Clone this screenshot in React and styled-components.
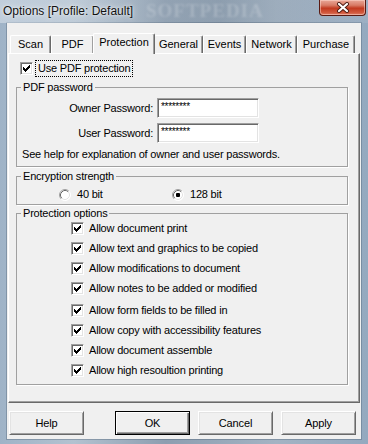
import React from 'react';
import styled, { createGlobalStyle } from 'styled-components';

const GlobalStyle = createGlobalStyle`
  html, body {
    margin: 0;
    padding: 0;
    background: #8ea4ba;
  }
  body {
    font-family: "Liberation Sans", Arial, sans-serif;
    font-size: 11px;
    color: #000;
  }
`;

const Window = styled.div`
  width: 368px;
  height: 444px;
  display: flex;
  flex-direction: column;
  background: linear-gradient(90deg, #9fb3c7 0%, #b3c2d0 20%, #8d9eb0 45%, #a3b3c3 75%, #94a9bf 100%);
  overflow: hidden;
`;

const TitleBar = styled.div`
  position: relative;
  height: 23px;
  display: flex;
  justify-content: space-between;
  align-items: flex-start;
  background: linear-gradient(90deg, rgba(220, 228, 236, 0.55) 0%, rgba(200, 210, 220, 0.25) 35%, rgba(80, 96, 112, 0.15) 60%, rgba(190, 200, 212, 0.2) 100%);
`;

const Title = styled.div`
  position: relative;
  z-index: 1;
  font-family: "Liberation Sans", Arial, sans-serif;
  font-size: 12px;
  line-height: 14px;
  padding: 4px 0 0 3px;
  color: #111;
  text-shadow: 0 0 6px rgba(255, 255, 255, 0.9), 0 0 2px rgba(255, 255, 255, 0.8);
`;

const Watermark = styled.div`
  position: absolute;
  left: 146px;
  top: 1px;
  font-family: "Liberation Serif", serif;
  font-weight: bold;
  font-size: 19px;
  line-height: 20px;
  letter-spacing: 1px;
  color: rgba(255, 255, 255, 0.2);
  filter: blur(0.8px);
  pointer-events: none;
`;

const CloseButton = styled.div`
  position: relative;
  z-index: 1;
  width: 47px;
  height: 16px;
  margin-right: 2px;
  box-sizing: border-box;
  border: 1px solid #5a1a12;
  border-top: none;
  border-radius: 0 0 4px 4px;
  background: linear-gradient(180deg, #e9a898 0%, #d87b66 35%, #c23a20 55%, #d15a3f 85%, #e0806a 100%);
  box-shadow: inset 0 0 0 1px rgba(255, 220, 210, 0.5);
  display: flex;
  align-items: center;
  justify-content: center;
`;

const Body = styled.div`
  flex: 1;
  display: flex;
  padding: 0 7px 5px 7px;
`;

const Client = styled.div`
  flex: 1;
  display: flex;
  flex-direction: column;
  background: #f0f0f0;
  padding-top: 10px;
  box-shadow: 0 0 0 1px rgba(70, 90, 110, 0.35);
`;

const TabStrip = styled.div`
  display: flex;
  align-items: flex-end;
  height: 20px;
  padding-left: 3px;
`;

const Tab = styled.div`
  position: relative;
  box-sizing: border-box;
  width: ${p => p.$w}px;
  height: ${p => (p.$active ? 21 : 18)}px;
  margin: ${p => (p.$active ? '0 -1px -1px -1px' : '0')};
  z-index: ${p => (p.$active ? 2 : 1)};
  background: #f0f0f0;
  border-top: 1px solid #fff;
  border-left: 1px solid #fff;
  border-right: 1px solid #696969;
  border-radius: 2px 2px 0 0;
  box-shadow: inset -1px 0 0 #a0a0a0;
  display: flex;
  align-items: center;
  justify-content: center;
  padding-bottom: ${p => (p.$active ? 3 : 0)}px;
  line-height: 13px;
`;

const Panel = styled.div`
  box-sizing: border-box;
  margin-left: 1px;
  width: 352px;
  display: flex;
  flex-direction: column;
  padding: 7px 0 17px 7px;
  border-top: 1px solid #fff;
  border-left: 1px solid #fff;
  border-right: 1px solid #696969;
  border-bottom: 1px solid #696969;
  box-shadow: inset -1px -1px 0 #a0a0a0;
`;

const CheckRow = styled.div`
  display: flex;
  align-items: center;
  height: 15px;
  padding-left: ${p => p.$indent || 0}px;
  margin-top: ${p => p.$mt || 0}px;
  gap: ${p => p.$gap || 5}px;
`;

const Box = styled.span`
  box-sizing: border-box;
  width: 13px;
  height: 13px;
  flex: none;
  background: #fff;
  border-top: 1px solid #a0a0a0;
  border-left: 1px solid #a0a0a0;
  border-right: 1px solid #fff;
  border-bottom: 1px solid #fff;
  box-shadow: inset 1px 1px 0 #696969, inset -1px -1px 0 #e3e3e3;
  display: flex;
`;

const FocusLabel = styled.span`
  outline: 1px dotted #000;
  outline-offset: 0;
  padding: 1px 2px;
  line-height: 13px;
  letter-spacing: -0.2px;
`;

const Label = styled.span`
  line-height: 13px;
  letter-spacing: -0.2px;
  white-space: nowrap;
`;

const Group = styled.fieldset`
  box-sizing: border-box;
  width: 332px;
  margin: ${p => p.$mt || 0}px 0 0 0;
  padding: 0;
  min-width: 0;
  border: 1px solid #a0a0a0;
  box-shadow: 1px 1px 0 #fff;
`;

const Legend = styled.legend`
  margin-left: 4px;
  padding: 0 2px;
  line-height: 13px;
  letter-spacing: -0.2px;
`;

const PasswordGrid = styled.div`
  display: grid;
  grid-template-columns: 136px 102px;
  column-gap: 4px;
  row-gap: 5px;
  align-items: center;
  padding-top: 4px;
`;

const FieldLabel = styled.span`
  text-align: right;
  letter-spacing: -0.2px;
  line-height: 13px;
`;

const Field = styled.div`
  box-sizing: border-box;
  height: 20px;
  background: #fff;
  border-top: 1px solid #a0a0a0;
  border-left: 1px solid #a0a0a0;
  border-right: 1px solid #fff;
  border-bottom: 1px solid #fff;
  box-shadow: inset 1px 1px 0 #696969, inset -1px -1px 0 #e3e3e3;
  padding: 3px 0 0 3px;
  font-size: 10px;
  line-height: 10px;
  letter-spacing: -0.3px;
`;

const HelpText = styled.div`
  padding: 5px 0 5px 5px;
  line-height: 13px;
  letter-spacing: -0.2px;
`;

const RadioRow = styled.div`
  display: grid;
  grid-template-columns: 113px auto;
  padding: 5px 0 3px 42px;
`;

const RadioItem = styled.div`
  display: flex;
  align-items: center;
  gap: 6px;
  height: 13px;
`;

const OptionList = styled.div`
  display: flex;
  flex-direction: column;
  padding: 1px 0 6px 54px;
`;

const ButtonRow = styled.div`
  display: flex;
  justify-content: space-between;
  margin-top: 8px;
  padding: 0 5px 0 2px;
`;

const ButtonGroup = styled.div`
  display: flex;
  gap: 8px;
`;

const Button = styled.div`
  box-sizing: border-box;
  width: 75px;
  height: 24px;
  display: flex;
  align-items: center;
  justify-content: center;
  background: #f0f0f0;
  border: 1px solid;
  border-color: ${p => (p.$default ? '#000' : '#fff #696969 #696969 #fff')};
  box-shadow: ${p =>
    p.$default
      ? 'inset 1px 1px 0 #fff, inset -1px -1px 0 #696969, inset -2px -2px 0 #a0a0a0'
      : 'inset 1px 1px 0 #e3e3e3, inset -1px -1px 0 #a0a0a0'};
  letter-spacing: -0.1px;
`;

const CHECK_TOPS = [2, 3, 4, 3, 2, 1, 0];

const CheckMark = () => (
  <svg width="11" height="11" viewBox="0 0 11 11" shapeRendering="crispEdges">
    {CHECK_TOPS.map((t, i) => (
      <rect key={i} x={i + 2} y={t + 2} width="1" height="3" fill="#000" />
    ))}
  </svg>
);

const Checkbox = ({ checked }) => <Box>{checked && <CheckMark />}</Box>;

const Radio = ({ checked }) => (
  <svg width="12" height="12" viewBox="0 0 12 12">
    <circle cx="6" cy="6" r="5.5" fill="#fff" />
    <path d="M2.11 9.89 A5.5 5.5 0 0 1 9.89 2.11" fill="none" stroke="#a0a0a0" strokeWidth="1" />
    <path d="M9.89 2.11 A5.5 5.5 0 0 1 2.11 9.89" fill="none" stroke="#ffffff" strokeWidth="1" />
    <path d="M2.82 9.18 A4.5 4.5 0 0 1 9.18 2.82" fill="none" stroke="#696969" strokeWidth="1" />
    <path d="M9.18 2.82 A4.5 4.5 0 0 1 2.82 9.18" fill="none" stroke="#e3e3e3" strokeWidth="1" />
    {checked && <rect x="4" y="4" width="4" height="4" rx="1" fill="#000" />}
  </svg>
);

const CloseGlyph = () => (
  <svg width="14" height="11" viewBox="0 0 14 11">
    <path d="M3 2 L11 9 M11 2 L3 9" stroke="#4a1a12" strokeWidth="4" strokeLinecap="round" />
    <path d="M3 2 L11 9 M11 2 L3 9" stroke="#fff" strokeWidth="2.2" strokeLinecap="round" />
  </svg>
);

const tabs = [
  { name: 'Scan', w: 41 },
  { name: 'PDF', w: 43 },
  { name: 'Protection', w: 62, active: true },
  { name: 'General', w: 49 },
  { name: 'Events', w: 43 },
  { name: 'Network', w: 51 },
  { name: 'Purchase', w: 58 },
];

const options = [
  'Allow document print',
  'Allow text and graphics to be copied',
  'Allow modifications to document',
  'Allow notes to be added or modified',
  'Allow form fields to be filled in',
  'Allow copy with accessibility features',
  'Allow document assemble',
  'Allow high resoultion printing',
];

const App = () => {
  return (
    <>
      <GlobalStyle />
      <Window>
        <TitleBar>
          <Watermark>SOFTPEDIA</Watermark>
          <Title>Options [Profile: Default]</Title>
          <CloseButton>
            <CloseGlyph />
          </CloseButton>
        </TitleBar>
        <Body>
          <Client>
            <TabStrip>
              {tabs.map(t => (
                <Tab key={t.name} $w={t.w} $active={t.active}>
                  {t.name}
                </Tab>
              ))}
            </TabStrip>
            <Panel>
              <CheckRow $indent={4} $gap={3}>
                <Checkbox checked />
                <FocusLabel>Use PDF protection</FocusLabel>
              </CheckRow>

              <Group $mt={5}>
                <Legend>PDF password</Legend>
                <PasswordGrid>
                  <FieldLabel>Owner Password:</FieldLabel>
                  <Field>********</Field>
                  <FieldLabel>User Password:</FieldLabel>
                  <Field>********</Field>
                </PasswordGrid>
                <HelpText>See help for explanation of owner and user passwords.</HelpText>
              </Group>

              <Group $mt={3}>
                <Legend>Encryption strength</Legend>
                <RadioRow>
                  <RadioItem>
                    <Radio />
                    <Label>40 bit</Label>
                  </RadioItem>
                  <RadioItem>
                    <Radio checked />
                    <Label>128 bit</Label>
                  </RadioItem>
                </RadioRow>
              </Group>

              <Group $mt={2}>
                <Legend>Protection options</Legend>
                <OptionList>
                  {options.map((o, i) => (
                    <CheckRow key={o} $mt={i === 0 ? 0 : i === 4 ? 7 : 5}>
                      <Checkbox checked />
                      <Label>{o}</Label>
                    </CheckRow>
                  ))}
                </OptionList>
              </Group>
            </Panel>
            <ButtonRow>
              <Button>Help</Button>
              <ButtonGroup>
                <Button $default>OK</Button>
                <Button>Cancel</Button>
                <Button>Apply</Button>
              </ButtonGroup>
            </ButtonRow>
          </Client>
        </Body>
      </Window>
    </>
  );
};

export default App;
